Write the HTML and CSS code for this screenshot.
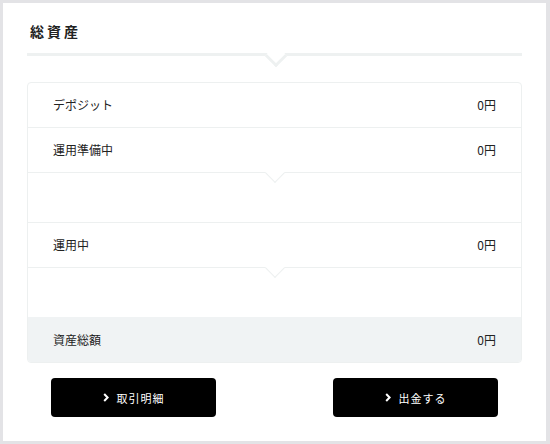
FILE: index.html
```html
<!DOCTYPE html>
<html lang="ja">
<head>
<meta charset="utf-8">
<link rel="stylesheet" href="styles.css">
</head>
<body>
<div class="panel">
  <h1 class="title">総資産</h1>
  <div class="divider"></div>
  <div class="card">
    <div class="row"><span>デポジット</span><span>0円</span></div>
    <div class="row notch"><span>運用準備中</span><span>0円</span></div>
    <div class="spacer"></div>
    <div class="row notch"><span>運用中</span><span>0円</span></div>
    <div class="spacer last"></div>
    <div class="row total"><span>資産総額</span><span>0円</span></div>
  </div>
  <div class="actions">
    <button class="btn"><svg class="chev" width="6" height="9" viewBox="0 0 6 9"><polyline points="1.2,1 4.6,4.5 1.2,8" fill="none" stroke="#fff" stroke-width="2"/></svg><span>取引明細</span></button>
    <button class="btn"><svg class="chev" width="6" height="9" viewBox="0 0 6 9"><polyline points="1.2,1 4.6,4.5 1.2,8" fill="none" stroke="#fff" stroke-width="2"/></svg><span>出金する</span></button>
  </div>
</div>
</body>
</html>
```
FILE: styles.css
```css
* { box-sizing: border-box; }
html, body { margin: 0; padding: 0; }
body {
  background: #e3e3e6;
  font-family: "Noto Sans CJK JP", "Noto Sans", sans-serif;
  color: #222;
  width: 550px;
  height: 444px;
  padding: 3px 4px 3px 3px;
}
.panel {
  background: #fff;
  height: 438px;
  padding: 18px 24px 0 24px;
}
.title {
  margin: 0 0 12px 3px;
  font-size: 14px;
  line-height: 20px;
  font-weight: 700;
  letter-spacing: 3px;
}
.divider {
  position: relative;
  height: 3px;
  background: #eef1f1;
}
.divider::after {
  content: "";
  position: absolute;
  left: 50%;
  top: 1.5px;
  width: 13px;
  height: 13px;
  margin-left: -6.5px;
  margin-top: -6.5px;
  background: #fff;
  border-right: 3px solid #eef1f1;
  border-bottom: 3px solid #eef1f1;
  transform: rotate(45deg);
}
.card {
  margin-top: 26px;
  border: 1px solid #edf0f0;
  border-radius: 4px;
  overflow: hidden;
}
.row {
  position: relative;
  height: 45px;
  display: flex;
  align-items: center;
  justify-content: space-between;
  padding: 0 25px 1px 25px;
  font-size: 12px;
  border-bottom: 1px solid #edf0f0;
}
.notch::after {
  content: "";
  position: absolute;
  left: 50%;
  bottom: -1px;
  width: 13px;
  height: 13px;
  margin-left: -6.5px;
  margin-bottom: -6.5px;
  background: #fff;
  border-right: 1px solid #edf0f0;
  border-bottom: 1px solid #edf0f0;
  transform: rotate(45deg);
  z-index: 1;
}
.spacer {
  height: 50px;
  border-bottom: 1px solid #edf0f0;
}
.spacer.last { border-bottom: none; height: 49px; }
.total {
  background: #f0f3f4;
  border-bottom: none;
  height: 45px;
}
.actions {
  display: flex;
  justify-content: space-between;
  padding: 15px 24px 0 24px;
}
.btn {
  width: 165px;
  height: 39px;
  background: #000;
  color: #fff;
  border: none;
  border-radius: 4px;
  display: flex;
  align-items: center;
  justify-content: center;
  gap: 8px;
  font-family: "Noto Sans CJK JP", "Noto Sans", sans-serif;
  font-size: 11px;
  letter-spacing: 1px;
  padding: 0;
}
.chev { display: block; }
```
